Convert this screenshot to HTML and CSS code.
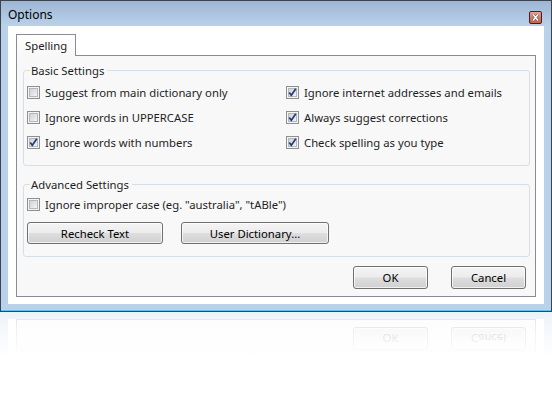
FILE: index.html
```html
<!DOCTYPE html>
<html lang="en">
<head>
  <meta charset="UTF-8">
  <title>Options</title>
  <link rel="stylesheet" href="styles.css">
</head>
<body>
  <div class="window">
    <div class="titlebar">
      <span class="title">Options</span>
      <span class="close-btn">
        <svg width="13" height="13" viewBox="0 0 13 13">
          <defs>
            <linearGradient id="closeBg" x1="0" y1="0" x2="0" y2="1">
              <stop offset="0" stop-color="#e9a99a"/>
              <stop offset="0.5" stop-color="#d47a66"/>
              <stop offset="1" stop-color="#c2604a"/>
            </linearGradient>
          </defs>
          <rect x="0.5" y="0.5" width="12" height="12" rx="1.5" fill="url(#closeBg)" stroke="#4a1c24"/>
          <path d="M4 3.5 L9 9.5 M9 3.5 L4 9.5" stroke="#5a4a4a" stroke-width="2.6"/>
          <path d="M4 3.5 L9 9.5 M9 3.5 L4 9.5" stroke="#ffffff" stroke-width="1.5"/>
        </svg>
      </span>
    </div>
    <div class="client">
      <div class="tabs">
        <div class="tab active">Spelling</div>
      </div>
      <div class="tab-panel">
        <div class="group basic">
          <div class="group-title">Basic Settings</div>
          <div class="option-grid">
            <label class="option"><span class="check"></span>Suggest from main dictionary only</label>
            <label class="option"><span class="check checked"></span>Ignore internet addresses and emails</label>
            <label class="option"><span class="check"></span>Ignore words in UPPERCASE</label>
            <label class="option"><span class="check checked"></span>Always suggest corrections</label>
            <label class="option"><span class="check checked"></span>Ignore words with numbers</label>
            <label class="option"><span class="check checked"></span>Check spelling as you type</label>
          </div>
        </div>
        <div class="group advanced">
          <div class="group-title">Advanced Settings</div>
          <label class="option"><span class="check"></span>Ignore improper case (eg. "australia", "tABle")</label>
          <div class="button-row">
            <button class="btn btn-recheck">Recheck Text</button>
            <button class="btn btn-dict">User Dictionary...</button>
          </div>
        </div>
        <div class="dialog-buttons">
          <button class="btn btn-dialog">OK</button>
          <button class="btn btn-dialog">Cancel</button>
        </div>
      </div>
    </div>
  </div>

  <!-- faint mirror of the window's lower edge -->
  <div class="reflection" aria-hidden="true">
    <div class="r-frame"></div>
    <div class="r-client">
      <div class="r-panel">
        <div class="dialog-buttons r-buttons">
          <span class="btn btn-dialog"><span class="flip">OK</span></span>
          <span class="btn btn-dialog"><span class="flip">Cancel</span></span>
        </div>
      </div>
    </div>
    <div class="r-fade"></div>
  </div>

  <script>
    // draw the tick into every checked box
    var tick = '<svg width="13" height="13" viewBox="0 0 13 13"><path d="M3.2 6.4 L5.3 9.2 L9.8 2.8" fill="none" stroke="#233b7a" stroke-width="1.7"/></svg>';
    document.querySelectorAll('.check.checked').forEach(function (el) {
      el.innerHTML = tick;
    });
  </script>
</body>
</html>
```

FILE: styles.css
```css
body { margin: 0; background: #fff; font-family: "Segoe UI", "Noto Sans", sans-serif; font-size: 11.3px; color: #1e1e1e; }

.window { width: 552px; height: 312px; box-sizing: border-box; border: 1px solid #3a4350; background: #bad1ea; box-shadow: inset 0 -1px 0 #5cc6ef; }

.titlebar { height: 25px; display: flex; align-items: flex-start; justify-content: space-between; background: linear-gradient(#9db6d4, #bad1ea); }
.title { margin: 6px 0 0 7px; font-size: 12px; line-height: 15px; color: #000; }
.close-btn { width: 13px; height: 13px; margin: 10px 9px 0 0; }
.close-btn svg { display: block; }

.client { margin: 0 7px; height: 278px; box-sizing: border-box; padding: 8px 8px 7px 8px; background: #fff; }

.tabs { display: flex; position: relative; z-index: 1; margin-bottom: -1px; }
.tab { height: 22px; box-sizing: border-box; width: 60px; padding: 3px 0 0 8px; border: 1px solid #898c95; border-bottom: none; background: linear-gradient(#fff, #f8f8f8); line-height: 15px; }

.tab-panel { height: 242px; box-sizing: border-box; border: 1px solid #898c95; background: #f8f8f8; padding: 14px 5px 7px 6px; }

.group { border: 1px solid #d5dfe5; border-radius: 3px; padding: 0 3px; }
.group.basic { height: 96px; box-sizing: border-box; }
.group.advanced { margin-top: 18px; height: 73px; box-sizing: border-box; }
.group-title { display: table; margin: -8px 0 0 3px; padding: 0 3px 0 1px; background: #f8f8f8; line-height: 15px; }

.option-grid { display: grid; grid-template-columns: 259px 1fr; margin-top: 2px; }
.option { display: flex; align-items: center; height: 25px; white-space: nowrap; }

.check { position: relative; flex: none; width: 13px; height: 13px; box-sizing: border-box; margin-right: 5px; border: 1px solid #8e8f8f; background: #f4f4f4; padding: 1px; }
.check::before { content: ""; display: block; width: 9px; height: 9px; box-sizing: border-box; border: 1px solid #b4b8bd; background: linear-gradient(135deg, #cfd2d6, #f2f3f4); }
.check svg { position: absolute; left: -1px; top: -1px; }

.button-row { display: flex; gap: 18px; margin-top: 5px; }

.btn { height: 22px; box-sizing: border-box; padding: 0; border: 1px solid #707070; border-radius: 3px; font: inherit; color: #000; background: linear-gradient(#f4f4f4 0%, #ececec 48%, #dedede 52%, #d0d0d0 100%); box-shadow: inset 0 0 0 1px rgba(255,255,255,0.7); }
.btn-recheck { width: 136px; }
.btn-dict { width: 148px; }

.dialog-buttons { display: flex; justify-content: flex-end; gap: 23px; margin: 9px 4px 0 0; }
.btn-dialog { width: 75px; height: 23px; }

.reflection { position: relative; width: 552px; height: 46px; box-sizing: border-box; padding: 0 1px; background: #bad1ea; opacity: 0.28; overflow: hidden; }
.r-frame { height: 7px; }
.r-client { margin: 0 7px; height: 60px; padding: 0 8px; background: #fff; }
.r-panel { height: 60px; box-sizing: border-box; border: 1px solid #898c95; border-bottom: none; background: #f8f8f8; padding: 7px 5px 0 6px; }
.r-buttons { margin-top: 0; }
.r-buttons .btn { display: flex; align-items: center; justify-content: center; background: linear-gradient(#d0d0d0 0%, #dedede 48%, #ececec 52%, #f4f4f4 100%); }
.flip { transform: scaleY(-1); }
.r-fade { position: absolute; left: 0; right: 0; top: 0; bottom: 0; background: linear-gradient(rgba(255,255,255,0) 0, rgba(255,255,255,0.5) 16px, #fff 44px); }
```
